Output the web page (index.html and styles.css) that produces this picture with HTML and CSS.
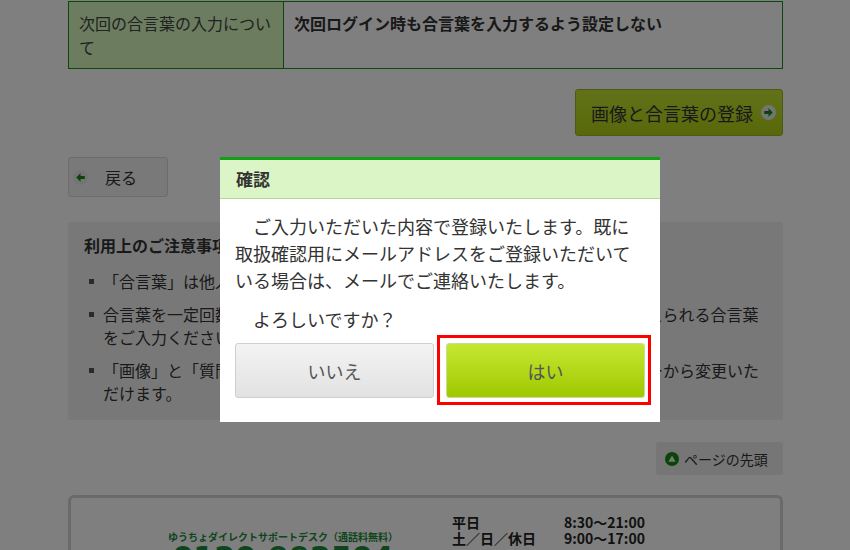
FILE: index.html
```html
<!doctype html>
<html>
    <head>
        <meta charset='utf-8'>
        <title>合言葉の登録確認</title>
        <link rel="stylesheet" href="styles.css">
    </head>
    <body>
        <div class='page'>
            <table class='setting'>
                <tr>
                    <th>次回の合言葉の入力について</th>
                    <td>次回ログイン時も合言葉を入力するよう設定しない</td>
                </tr>
            </table>

            <div class='actions'>
                <a class='btn-register' href='#'>画像と合言葉の登録
                    <svg width="15" height="15" viewBox="0 0 14 14"><circle cx="7" cy="7" r="7" fill="#e8e8e8"/><path d="M3 5.5h4V3l4 4-4 4V8.5H3z" fill="#128a12"/></svg>
                </a>
            </div>

            <div class='back-row'>
                <a class='btn-back' href='#'>
                    <svg width="15" height="15" viewBox="0 0 14 14"><circle cx="7" cy="7" r="7" fill="#e8e8e8"/><path d="M11 5.5H7V3L3 7l4 4V8.5h4z" fill="#128a12"/></svg>
                    戻る
                </a>
            </div>

            <div class='notice'>
                <h3>利用上のご注意事項</h3>
                <ul>
                    <li>「合言葉」は他人に知られないよう、大切に管理してください。</li>
                    <li>合言葉を一定回数以上間違えた場合は、次回ログイン時には質問に対して答えられる合言葉をご入力ください。</li>
                    <li>「画像」と「質問」は、ログイン後にお客さまご自身で「各種設定」メニューから変更いただけます。</li>
                </ul>
            </div>

            <div class='pagetop-row'>
                <a class='btn-top' href='#'>
                    <svg width="14" height="14" viewBox="0 0 14 14"><circle cx="7" cy="7" r="7" fill="#128a12"/><path d="M7 3.5l3.6 6.2H3.4z" fill="#eee"/></svg>
                    ページの先頭
                </a>
            </div>

            <div class='support'>
                <div class='desk'>
                    <p class='desk-name'>ゆうちょダイレクトサポートデスク（通話料無料）</p>
                    <p class='desk-tel'>0120-992504</p>
                </div>
                <dl class='hours'>
                    <dt>平日</dt><dd>8:30～21:00</dd>
                    <dt>土／日／休日</dt><dd>9:00～17:00</dd>
                </dl>
            </div>
        </div>

        <div class='mask'></div>

        <div class='dialog'>
            <div class='dialog-hd'>確認</div>
            <div class='dialog-bd'>
                <p>ご入力いただいた内容で登録いたします。既に取扱確認用にメールアドレスをご登録いただいている場合は、メールでご連絡いたします。</p>
                <p>よろしいですか？</p>
                <div class='dialog-btns'>
                    <a class='btn btn-no' href='#'>いいえ</a>
                    <a class='btn btn-yes' href='#'>はい</a>
                </div>
            </div>
        </div>
    </body>
</html>
```

FILE: styles.css
```css
html,body,ul,li,p,h3,dl,dt,dd {
    margin:0;
    padding:0;
}
ul,li {
    list-style:none;
}
a {
    text-decoration:none;
    color:inherit;
}
body {
    background:#fff;
    font-family:"Noto Sans CJK JP","Noto Sans",sans-serif;
    font-size:16px;
    color:#333;
}
.page {
    width:715px;
    margin-left:68px;
    padding-top:1px;
}

/* 設定テーブル */
.setting {
    width:100%;
    border-collapse:collapse;
}
.setting th,
.setting td {
    border:1px solid #1c8c1c;
    padding:9px 10px;
    line-height:24px;
    font-size:16px;
    text-align:left;
    vertical-align:top;
}
.setting th {
    width:194px;
    background:#d6f8bf;
    font-weight:normal;
    color:#444;
}
.setting td {
    font-weight:bold;
}

.actions {
    margin-top:20px;
    display:flex;
    justify-content:flex-end;
}
.btn-register {
    display:flex;
    align-items:center;
    height:45px;
    padding:0 6px 0 15px;
    border:1px solid #9bb22e;
    border-radius:3px;
    background:linear-gradient(#c4e432,#b0d014);
    font-size:18px;
    color:#333;
}
.btn-register svg {
    margin-left:8px;
}

.back-row {
    margin-top:21px;
}
.btn-back {
    display:flex;
    align-items:center;
    width:98px;
    height:38px;
    border:1px solid #d8d8d8;
    border-radius:3px;
    background:#f3f3f3;
}
.btn-back svg {
    margin:0 17px 0 4px;
}

/* 注意事項 */
.notice {
    margin-top:25px;
    padding:11px 16px 15px;
    background:#f0f0f0;
    border-radius:3px;
}
.notice h3 {
    font-size:16px;
    line-height:24px;
}
.notice ul {
    margin-top:13px;
}
.notice li {
    position:relative;
    padding-left:19px;
    margin-top:10px;
    line-height:23px;
}
.notice li:first-child {
    margin-top:0;
}
.notice li:before {
    content:'';
    position:absolute;
    left:5px;
    top:9px;
    width:5px;
    height:5px;
    background:#555;
}

.pagetop-row {
    margin-top:22px;
    display:flex;
    justify-content:flex-end;
}
.btn-top {
    display:flex;
    align-items:center;
    width:127px;
    height:33px;
    box-sizing:border-box;
    padding-left:9px;
    background:#ececec;
    border-radius:3px;
    font-size:14px;
}
.btn-top svg {
    margin-right:5px;
}

/* サポートデスク */
.support {
    margin-top:20px;
    height:120px;
    display:flex;
    border:3px solid #d4d4d4;
    border-radius:6px;
}
.desk {
    margin:32px 0 0 97px;
    text-align:center;
    color:#1a8a3a;
}
.desk-name {
    font-size:10px;
    font-weight:bold;
    line-height:14px;
}
.desk-tel {
    font-family:"DejaVu Sans",sans-serif;
    font-size:30px;
    font-weight:bold;
    line-height:28px;
}
.hours {
    margin:16px 0 0 54px;
    display:grid;
    grid-template-columns:112px auto;
    align-content:start;
    font-size:14px;
    font-weight:bold;
    line-height:16px;
    color:#222;
}

/* 確認ダイアログ */
.mask {
    position:fixed;
    top:0;
    left:0;
    right:0;
    bottom:0;
    background:rgba(0,0,0,0.5);
}
.dialog {
    position:fixed;
    left:220px;
    top:157px;
    width:440px;
    background:#fff;
    border-top:3px solid #14a014;
}
.dialog-hd {
    height:38px;
    line-height:38px;
    padding:0 16px;
    background:#dcf5c6;
    border-bottom:1px solid #b9d3a3;
    font-size:17px;
    font-weight:bold;
}
.dialog-bd {
    padding:14px 15px 24px;
}
.dialog-bd p {
    font-size:18px;
    line-height:27px;
    text-indent:1em;
}
.dialog-bd p + p {
    margin-top:12px;
}
.dialog-btns {
    margin-top:10px;
    display:grid;
    grid-template-columns:1fr 1fr;
    gap:12px;
}
.btn {
    height:55px;
    box-sizing:border-box;
    display:flex;
    align-items:center;
    justify-content:center;
    border:1px solid #cfcfcf;
    border-radius:3px;
    font-size:18px;
    color:#555;
}
.btn-no {
    background:linear-gradient(#f3f3f3,#e2e2e2);
}
.btn-yes {
    position:relative;
    border-color:#cbdc9a;
    background:linear-gradient(#c4e832,#a0c800);
}
.btn-yes:after {
    content:'';
    position:absolute;
    top:-9px;
    right:-7px;
    bottom:-8px;
    left:-10px;
    border:3px solid #f00;
}
```
